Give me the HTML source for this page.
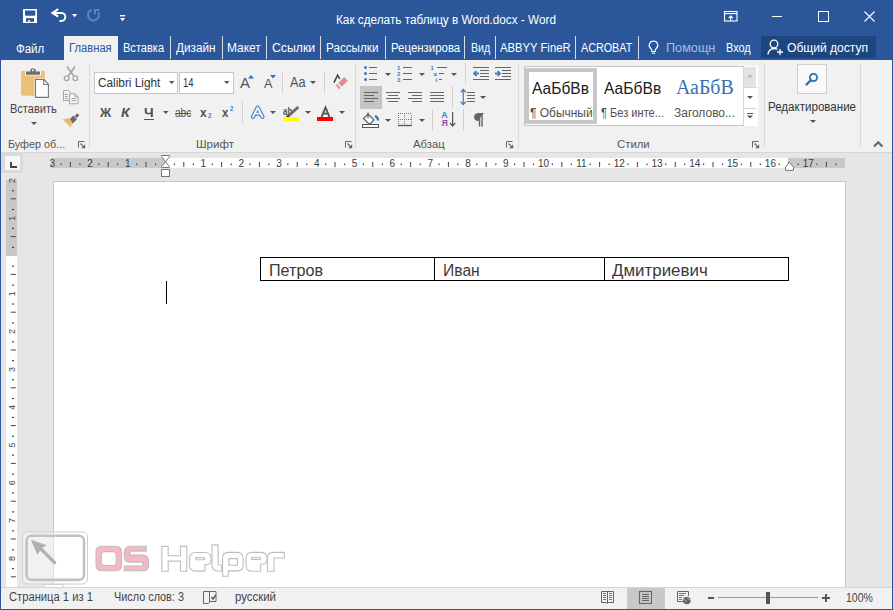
<!DOCTYPE html>
<html><head><meta charset="utf-8"><style>
html,body{margin:0;padding:0;width:893px;height:610px;overflow:hidden;background:#fff;}
body{position:relative;font-family:"Liberation Sans",sans-serif;}
.t{position:absolute;white-space:nowrap;transform-origin:0 0;}
.r{position:absolute;}
svg.r{overflow:visible;}
</style></head><body>
<div class="r" style="left:0px;top:0px;width:893px;height:60px;background:#2B579A;"></div>
<svg class="r" style="left:23px;top:9px;" width="14" height="14" viewBox="0 0 14 14"><rect x="0" y="0" width="14" height="14" rx="0.6" fill="#fff"/><path d="M2 1.4h10.3v4.6l-0.8 0.8h-8.7l-0.8-0.8z" fill="#2B579A"/><rect x="3" y="9.2" width="8" height="3.6" fill="#2B579A"/><rect x="5.1" y="11.2" width="2" height="1.6" fill="#fff"/></svg>
<svg class="r" style="left:50px;top:7px;" width="18" height="17" viewBox="0 0 18 17"><path d="M2.5 5.9H11.3A4 4 0 0 1 11.3 13.9H9.5" fill="none" stroke="#fff" stroke-width="2"/><path d="M8.2 2.2L2.6 5.9 8.2 9.6" fill="none" stroke="#fff" stroke-width="2.2"/></svg>
<svg class="r" style="left:71.8px;top:13.8px;" width="5.2" height="3.2" viewBox="0 0 5.2 3.2"><path d="M0 0h5.2l-2.6 3.2z" fill="#fff"/></svg>
<svg class="r" style="left:86px;top:8px;" width="15" height="15" viewBox="0 0 15 15"><path d="M5.62 1.83A5.5 5.5 0 1 0 12.26 4.25" fill="none" stroke="#6182B9" stroke-width="2.1"/><path d="M8 1.1H14L12.6 3H10V5.6L8 6.9Z" fill="#6182B9"/></svg>
<svg class="r" style="left:119.9px;top:14.9px;" width="5.1" height="6.2" viewBox="0 0 5.1 6.2"><rect x="0" y="0" width="5.1" height="1.4" fill="#fff"/><path d="M0 3h5.1l-2.55 3.2z" fill="#fff"/></svg>
<div class="t" style="left:335.60px;top:11.64px;font-size:12px;line-height:16px;color:#fff;font-weight:400;font-family:'Liberation Sans',sans-serif;transform:scaleX(0.9808);">Как сделать таблицу в Word.docx - Word</div>
<svg class="r" style="left:724px;top:11px;" width="14" height="11" viewBox="0 0 14 11"><rect x="0.5" y="0.5" width="12.5" height="9.5" fill="none" stroke="#fff" stroke-width="1.1"/><line x1="0.5" y1="2.6" x2="13" y2="2.6" stroke="#fff" stroke-width="1.1"/><path d="M6.75 10V5M4.6 7.1L6.75 5 8.9 7.1" fill="none" stroke="#fff" stroke-width="1.1"/></svg>
<div class="r" style="left:772px;top:16px;width:10px;height:1px;background:#fff;"></div>
<svg class="r" style="left:818px;top:11px;" width="11" height="11" viewBox="0 0 11 11"><rect x="0.5" y="0.5" width="10" height="10" fill="none" stroke="#fff" stroke-width="1"/></svg>
<svg class="r" style="left:864px;top:11px;" width="11" height="11" viewBox="0 0 11 11"><path d="M0.5 0.5L10.5 10.5M10.5 0.5L0.5 10.5" stroke="#fff" stroke-width="1.1"/></svg>
<div class="r" style="left:64px;top:36px;width:54px;height:24px;background:#F1F1F1;"></div>
<div class="t" style="left:16.00px;top:40.64px;font-size:12px;line-height:16px;color:#fff;font-weight:400;font-family:'Liberation Sans',sans-serif;transform:scaleX(0.9567);">Файл</div>
<div class="t" style="left:68.50px;top:39.84px;font-size:12px;line-height:16px;color:#2B579A;font-weight:400;font-family:'Liberation Sans',sans-serif;transform:scaleX(0.9348);">Главная</div>
<div class="t" style="left:122.90px;top:39.84px;font-size:12px;line-height:16px;color:#fff;font-weight:400;font-family:'Liberation Sans',sans-serif;transform:scaleX(0.9200);">Вставка</div>
<div class="t" style="left:176.40px;top:39.84px;font-size:12px;line-height:16px;color:#fff;font-weight:400;font-family:'Liberation Sans',sans-serif;transform:scaleX(0.9825);">Дизайн</div>
<div class="t" style="left:227.20px;top:39.84px;font-size:12px;line-height:16px;color:#fff;font-weight:400;font-family:'Liberation Sans',sans-serif;transform:scaleX(0.9941);">Макет</div>
<div class="t" style="left:271.70px;top:39.84px;font-size:12px;line-height:16px;color:#fff;font-weight:400;font-family:'Liberation Sans',sans-serif;transform:scaleX(1.0214);">Ссылки</div>
<div class="t" style="left:326.20px;top:39.84px;font-size:12px;line-height:16px;color:#fff;font-weight:400;font-family:'Liberation Sans',sans-serif;transform:scaleX(0.9741);">Рассылки</div>
<div class="t" style="left:390.70px;top:39.84px;font-size:12px;line-height:16px;color:#fff;font-weight:400;font-family:'Liberation Sans',sans-serif;transform:scaleX(0.9521);">Рецензирова</div>
<div class="t" style="left:470.50px;top:39.84px;font-size:12px;line-height:16px;color:#fff;font-weight:400;font-family:'Liberation Sans',sans-serif;transform:scaleX(0.8864);">Вид</div>
<div class="t" style="left:500.00px;top:39.84px;font-size:12px;line-height:16px;color:#fff;font-weight:400;font-family:'Liberation Sans',sans-serif;transform:scaleX(0.9387);">ABBYY FineR</div>
<div class="t" style="left:580.50px;top:39.84px;font-size:12px;line-height:16px;color:#fff;font-weight:400;font-family:'Liberation Sans',sans-serif;transform:scaleX(0.8966);">ACROBAT</div>
<div class="r" style="left:170px;top:36px;width:1px;height:23px;background:#D5DDEA;"></div>
<div class="r" style="left:222px;top:36px;width:1px;height:23px;background:#D5DDEA;"></div>
<div class="r" style="left:266px;top:36px;width:1px;height:23px;background:#D5DDEA;"></div>
<div class="r" style="left:320px;top:36px;width:1px;height:23px;background:#D5DDEA;"></div>
<div class="r" style="left:385px;top:36px;width:1px;height:23px;background:#D5DDEA;"></div>
<div class="r" style="left:464px;top:36px;width:1px;height:23px;background:#D5DDEA;"></div>
<div class="r" style="left:495px;top:36px;width:1px;height:23px;background:#D5DDEA;"></div>
<div class="r" style="left:575px;top:36px;width:1px;height:23px;background:#D5DDEA;"></div>
<div class="r" style="left:638px;top:36px;width:1px;height:23px;background:#D5DDEA;"></div>
<div class="r" style="left:571px;top:37px;width:4px;height:22px;background:#2B579A;"></div>
<svg class="r" style="left:648px;top:40px;" width="11" height="15" viewBox="0 0 11 15"><path d="M5.5 1a4.3 4.3 0 0 0-2.6 7.7c.6.5.9 1.2.9 2v.8h3.4v-.8c0-.8.3-1.5.9-2A4.3 4.3 0 0 0 5.5 1z" fill="none" stroke="#fff" stroke-width="1.1"/><path d="M3.8 13.2h3.4" stroke="#fff" stroke-width="1.1"/></svg>
<div class="t" style="left:665.80px;top:39.84px;font-size:12px;line-height:16px;color:#A9BEDF;font-weight:400;font-family:'Liberation Sans',sans-serif;transform:scaleX(1.0553);">Помощн</div>
<div class="t" style="left:726.20px;top:39.84px;font-size:12px;line-height:16px;color:#fff;font-weight:400;font-family:'Liberation Sans',sans-serif;transform:scaleX(0.9111);">Вход</div>
<div class="r" style="left:761px;top:36px;width:115px;height:22px;background:#1D4681;"></div>
<svg class="r" style="left:767px;top:39px;" width="17" height="17" viewBox="0 0 17 17"><circle cx="7" cy="5" r="3.8" fill="none" stroke="#fff" stroke-width="1.3"/><path d="M1 15.5c0-3.5 2.7-6 6-6 1.2 0 2.3.3 3.2.9" fill="none" stroke="#fff" stroke-width="1.3"/><path d="M13 10v6M10 13h6" stroke="#fff" stroke-width="1.3"/></svg>
<div class="t" style="left:787.00px;top:39.84px;font-size:12px;line-height:16px;color:#fff;font-weight:400;font-family:'Liberation Sans',sans-serif;transform:scaleX(1.0049);">Общий доступ</div>
<div class="r" style="left:0px;top:60px;width:893px;height:92px;background:#F1F1F1;"></div>
<div class="r" style="left:0px;top:152px;width:893px;height:1px;background:#D6D6D6;"></div>
<div class="r" style="left:89px;top:64px;width:1px;height:84px;background:#DADADA;"></div>
<div class="r" style="left:355px;top:64px;width:1px;height:84px;background:#DADADA;"></div>
<div class="r" style="left:518px;top:64px;width:1px;height:84px;background:#DADADA;"></div>
<div class="r" style="left:764px;top:64px;width:1px;height:84px;background:#DADADA;"></div>
<div class="r" style="left:860px;top:64px;width:1px;height:84px;background:#DADADA;"></div>
<div class="t" style="left:7.50px;top:136.96px;font-size:10.5px;line-height:14px;color:#555;font-weight:400;font-family:'Liberation Sans',sans-serif;transform:scaleX(1.0268);">Буфер об...</div>
<div class="t" style="left:195.50px;top:137.16px;font-size:10.5px;line-height:14px;color:#555;font-weight:400;font-family:'Liberation Sans',sans-serif;transform:scaleX(1.1000);">Шрифт</div>
<div class="t" style="left:413.30px;top:137.16px;font-size:10.5px;line-height:14px;color:#555;font-weight:400;font-family:'Liberation Sans',sans-serif;transform:scaleX(1.0767);">Абзац</div>
<div class="t" style="left:617.00px;top:137.16px;font-size:10.5px;line-height:14px;color:#555;font-weight:400;font-family:'Liberation Sans',sans-serif;transform:scaleX(1.0800);">Стили</div>
<svg class="r" style="left:78px;top:141px;" width="8" height="8" viewBox="0 0 8 8"><path d="M0.5 6.5V0.5H6.5" fill="none" stroke="#666" stroke-width="1"/><path d="M2.5 2.5L5.5 5.5" stroke="#666" stroke-width="1.1"/><path d="M7.2 3.2V7.2H3.2Z" fill="#666"/></svg>
<svg class="r" style="left:345px;top:141px;" width="8" height="8" viewBox="0 0 8 8"><path d="M0.5 6.5V0.5H6.5" fill="none" stroke="#666" stroke-width="1"/><path d="M2.5 2.5L5.5 5.5" stroke="#666" stroke-width="1.1"/><path d="M7.2 3.2V7.2H3.2Z" fill="#666"/></svg>
<svg class="r" style="left:506px;top:141px;" width="8" height="8" viewBox="0 0 8 8"><path d="M0.5 6.5V0.5H6.5" fill="none" stroke="#666" stroke-width="1"/><path d="M2.5 2.5L5.5 5.5" stroke="#666" stroke-width="1.1"/><path d="M7.2 3.2V7.2H3.2Z" fill="#666"/></svg>
<svg class="r" style="left:752px;top:141px;" width="8" height="8" viewBox="0 0 8 8"><path d="M0.5 6.5V0.5H6.5" fill="none" stroke="#666" stroke-width="1"/><path d="M2.5 2.5L5.5 5.5" stroke="#666" stroke-width="1.1"/><path d="M7.2 3.2V7.2H3.2Z" fill="#666"/></svg>
<svg class="r" style="left:21px;top:68px;" width="29" height="31" viewBox="0 0 29 31"><rect x="0" y="2.8" width="24" height="25" rx="2" fill="#EBC177"/><path d="M4 3H8.7V1.6Q8.7 -0.2 10.5 -0.2H13.5Q15.3 -0.2 15.3 1.6V3H20V7.6H4Z" fill="#F4F4F4"/><path d="M5 3.6H9.3V1.9Q9.3 0.4 10.8 0.4H13.2Q14.7 0.4 14.7 1.9V3.6H19V6.8H5Z" fill="#6E6E6E"/><rect x="11.1" y="1.6" width="1.8" height="1.6" fill="#fff"/><path d="M14.5 11.5h8.5l4.4 4.6v13.3h-12.9z" fill="#fff" stroke="#F4F4F4" stroke-width="2.2"/><path d="M14.5 11.5h8.5l4.4 4.6v13.3h-12.9z" fill="#fff" stroke="#777" stroke-width="1.1"/><path d="M22.8 11.5v5h4.6" fill="none" stroke="#777" stroke-width="1.1"/></svg>
<div class="t" style="left:9.80px;top:100.84px;font-size:12px;line-height:16px;color:#444;font-weight:400;font-family:'Liberation Sans',sans-serif;transform:scaleX(0.9176);">Вставить</div>
<svg class="r" style="left:31px;top:122px;" width="6" height="4" viewBox="0 0 6 4"><path d="M0 0h6l-3 3z" fill="#555"/></svg>
<svg class="r" style="left:58px;top:62px;" width="30" height="66" viewBox="0 0 30 66"><path d="M9 4.5L15.6 13.8M17 4.5L10.4 13.8" stroke="#A6A6A6" stroke-width="1.7"/><circle cx="8.7" cy="16.2" r="2.4" fill="none" stroke="#A6A6A6" stroke-width="1.3"/><circle cx="17.3" cy="16.2" r="2.4" fill="none" stroke="#A6A6A6" stroke-width="1.3"/><path d="M5.5 28.5H10.5L12.5 30.5V38.5H5.5Z" fill="#F4F4F4" stroke="#A6A6A6"/><path d="M11.5 31.8H17L20 34.8V41.8H11.5Z" fill="#F4F4F4" stroke="#A6A6A6"/><path d="M17 31.8V34.8H20" fill="none" stroke="#A6A6A6"/><path d="M7 32.5h3M7 34.5h3M7 36.5h3M13.5 36.5h4.5M13.5 38.5h4.5" stroke="#A6A6A6"/><path d="M20.4 52.2L17.6 55" stroke="#6A6A6A" stroke-width="2.8"/><path d="M17.2 55.4L12.6 60" stroke="#6A6A6A" stroke-width="5.2"/><path d="M4.5 57.6L10.4 56L14.3 59.9L12.8 65.6Z" fill="#E8BD6B"/></svg>
<div class="r" style="left:94px;top:72px;width:84px;height:22px;background:#fff;border:1px solid #C6C6C6;box-sizing:border-box;"></div>
<div class="r" style="left:179px;top:72px;width:55px;height:22px;background:#fff;border:1px solid #C6C6C6;box-sizing:border-box;"></div>
<div class="t" style="left:97.90px;top:75.34px;font-size:12px;line-height:16px;color:#333;font-weight:400;font-family:'Liberation Sans',sans-serif;transform:scaleX(0.9844);">Calibri Light</div>
<div class="t" style="left:183.00px;top:75.34px;font-size:12px;line-height:16px;color:#333;font-weight:400;font-family:'Liberation Sans',sans-serif;transform:scaleX(0.7857);">14</div>
<svg class="r" style="left:168.5px;top:81px;" width="6" height="4" viewBox="0 0 6 4"><path d="M0 0h5.5l-2.75 3z" fill="#555"/></svg>
<svg class="r" style="left:224px;top:81px;" width="6" height="4" viewBox="0 0 6 4"><path d="M0 0h5.5l-2.75 3z" fill="#555"/></svg>
<div class="t" style="left:240.00px;top:72.50px;font-size:15px;line-height:20px;color:#555;font-weight:400;font-family:'Liberation Sans',sans-serif;transform:scaleX(1.0000);">A</div>
<svg class="r" style="left:248px;top:75px;" width="6" height="4" viewBox="0 0 6 4"><path d="M0 3.5h6L3 0z" fill="#2F6EB7"/></svg>
<div class="t" style="left:263.50px;top:75.54px;font-size:12px;line-height:16px;color:#555;font-weight:400;font-family:'Liberation Sans',sans-serif;transform:scaleX(1.0625);">A</div>
<svg class="r" style="left:270px;top:75px;" width="6" height="4" viewBox="0 0 6 4"><path d="M0 0h6L3 3.5z" fill="#2F6EB7"/></svg>
<div class="r" style="left:282px;top:72px;width:1px;height:21px;background:#D0D0D0;"></div>
<div class="t" style="left:290.00px;top:73.15px;font-size:14px;line-height:18px;color:#555;font-weight:400;font-family:'Liberation Sans',sans-serif;transform:scaleX(0.9118);">Aa</div>
<svg class="r" style="left:310px;top:81px;" width="6" height="4" viewBox="0 0 6 4"><path d="M0 0h6l-3 3z" fill="#555"/></svg>
<div class="r" style="left:324px;top:72px;width:1px;height:21px;background:#D0D0D0;"></div>
<svg class="r" style="left:325px;top:68px;" width="30" height="27" viewBox="0 0 30 27"><path d="M8.9 14.6L12.6 7.1 14.8 11" fill="none" stroke="#444" stroke-width="1.5"/><path d="M19.2 9.1L22.8 12.8 16.8 18.8 13.3 15z" fill="#E8899A"/><path d="M10.6 17L12 16 15.7 19.7 14.4 21.5z" fill="#E8899A"/></svg>
<div class="t" style="left:99.85px;top:103.90px;font-size:13px;line-height:17px;color:#505050;font-weight:700;font-family:'Liberation Sans',sans-serif;transform:scaleX(0.9462);">Ж</div>
<div class="t" style="left:121.00px;top:103.90px;font-size:13px;line-height:17px;color:#505050;font-weight:700;font-family:'Liberation Sans',sans-serif;transform:scaleX(1.0875);font-style:italic;">К</div>
<div class="t" style="left:144.00px;top:103.90px;font-size:13px;line-height:17px;color:#505050;font-weight:700;font-family:'Liberation Sans',sans-serif;transform:scaleX(1.0556);">Ч</div>
<div class="r" style="left:144px;top:119px;width:10px;height:1px;background:#505050;"></div>
<svg class="r" style="left:163px;top:111px;" width="6" height="4" viewBox="0 0 6 4"><path d="M0 0h5.5l-2.75 3z" fill="#555"/></svg>
<div class="t" style="left:174.80px;top:104.74px;font-size:12px;line-height:16px;color:#555;font-weight:400;font-family:'Liberation Sans',sans-serif;transform:scaleX(0.8421);">abc</div>
<div class="r" style="left:175px;top:112.5px;width:16px;height:1px;background:#555;"></div>
<div class="t" style="left:199.50px;top:103.90px;font-size:13px;line-height:17px;color:#505050;font-weight:700;font-family:'Liberation Sans',sans-serif;transform:scaleX(0.9125);">x</div>
<div class="t" style="left:207.60px;top:112.45px;font-size:6.5px;line-height:8px;color:#3E7BC4;font-weight:700;font-family:'Liberation Sans',sans-serif;transform:scaleX(0.9500);">2</div>
<div class="t" style="left:221.50px;top:103.90px;font-size:13px;line-height:17px;color:#505050;font-weight:700;font-family:'Liberation Sans',sans-serif;transform:scaleX(0.8750);">x</div>
<div class="t" style="left:229.70px;top:104.75px;font-size:6.5px;line-height:8px;color:#3E7BC4;font-weight:700;font-family:'Liberation Sans',sans-serif;transform:scaleX(0.9000);">2</div>
<div class="r" style="left:242px;top:102px;width:1px;height:21px;background:#D0D0D0;"></div>
<svg class="r" style="left:248px;top:100px;" width="20" height="22" viewBox="0 0 20 22"><path d="M5 16.8L9.7 7.6 14.4 16.8M7 13.6H12.4" fill="none" stroke="#4A80C6" stroke-width="4.2" stroke-linejoin="round" stroke-linecap="round"/><path d="M5 16.8L9.7 7.6 14.4 16.8M7 13.6H12.4" fill="none" stroke="#F2F6FC" stroke-width="1.9" stroke-linejoin="round" stroke-linecap="round"/></svg>
<svg class="r" style="left:270px;top:111px;" width="6" height="4" viewBox="0 0 6 4"><path d="M0 0h6l-3 3z" fill="#555"/></svg>
<div class="t" style="left:282.80px;top:104.53px;font-size:10px;line-height:13px;color:#555;font-weight:700;font-family:'Liberation Sans',sans-serif;transform:scaleX(0.7917);">ab</div>
<svg class="r" style="left:284px;top:104px;" width="16" height="14" viewBox="0 0 16 14"><path d="M14.3 3L3.2 13" stroke="#6A6A6A" stroke-width="3"/><path d="M4.5 11.5L2.2 13.8" stroke="#333" stroke-width="1.5"/></svg>
<div class="r" style="left:283px;top:117px;width:16px;height:4px;background:#FFFF00;"></div>
<svg class="r" style="left:305px;top:111px;" width="6" height="4" viewBox="0 0 6 4"><path d="M0 0h6l-3 3z" fill="#555"/></svg>
<svg class="r" style="left:317px;top:104px;" width="17" height="14" viewBox="0 0 17 14"><path d="M4.6 12.8L8.5 3.4 12.4 12.8M6.1 9.6H10.9" fill="none" stroke="#555" stroke-width="1.9"/></svg>
<div class="r" style="left:317px;top:117px;width:16px;height:4px;background:#FF0000;"></div>
<svg class="r" style="left:339px;top:111px;" width="6" height="4" viewBox="0 0 6 4"><path d="M0 0h6l-3 3z" fill="#555"/></svg>
<svg class="r" style="left:358px;top:62px;" width="60" height="24" viewBox="0 0 60 24"><circle cx="7.5" cy="5.5" r="1.5" fill="#3E7BC4"/><circle cx="7.5" cy="11.5" r="1.5" fill="#3E7BC4"/><circle cx="7.5" cy="17.5" r="1.5" fill="#3E7BC4"/><rect x="11" y="5" width="8" height="1" fill="#666"/><rect x="11" y="11" width="8" height="1" fill="#666"/><rect x="11" y="17" width="8" height="1" fill="#666"/></svg>
<svg class="r" style="left:385px;top:73px;" width="6" height="4" viewBox="0 0 6 4"><path d="M0 0h6l-3 3z" fill="#555"/></svg>
<svg class="r" style="left:390px;top:62px;" width="30" height="24" viewBox="0 0 30 24"><g font-size="6" font-family="Liberation Sans" fill="#3E7BC4" font-weight="700"><text x="7" y="8">1</text><text x="7" y="14">2</text><text x="7" y="20">3</text></g><rect x="13" y="5" width="9" height="1" fill="#666"/><rect x="13" y="11" width="9" height="1" fill="#666"/><rect x="13" y="17" width="9" height="1" fill="#666"/></svg>
<svg class="r" style="left:419px;top:73px;" width="6" height="4" viewBox="0 0 6 4"><path d="M0 0h6l-3 3z" fill="#555"/></svg>
<svg class="r" style="left:425px;top:62px;" width="30" height="24" viewBox="0 0 30 24"><g font-size="6" font-family="Liberation Sans" fill="#3E7BC4" font-weight="700"><text x="5.5" y="8">1</text><text x="8.5" y="14">a</text><text x="10.5" y="20">i</text></g><rect x="12" y="5" width="10" height="1" fill="#666"/><rect x="14" y="11" width="5" height="1" fill="#666"/><rect x="14" y="17" width="3" height="1" fill="#666"/></svg>
<svg class="r" style="left:451px;top:73px;" width="6" height="4" viewBox="0 0 6 4"><path d="M0 0h6l-3 3z" fill="#555"/></svg>
<div class="r" style="left:465px;top:63px;width:1px;height:21px;background:#D0D0D0;"></div>
<svg class="r" style="left:470px;top:62px;" width="45" height="24" viewBox="0 0 45 24"><rect x="3" y="5" width="16" height="1" fill="#666"/><rect x="3" y="17" width="16" height="1" fill="#666"/><rect x="10" y="8" width="9" height="1" fill="#666"/><rect x="10" y="11" width="9" height="1" fill="#666"/><rect x="10" y="14" width="9" height="1" fill="#666"/><path d="M4 11.5h5M6.4 9L4 11.5 6.4 14" fill="none" stroke="#3E7BC4" stroke-width="1.8"/><rect x="25" y="5" width="16" height="1" fill="#666"/><rect x="25" y="17" width="16" height="1" fill="#666"/><rect x="32" y="8" width="9" height="1" fill="#666"/><rect x="32" y="11" width="9" height="1" fill="#666"/><rect x="32" y="14" width="9" height="1" fill="#666"/><path d="M25 11.5h5M27.6 9L30 11.5 27.6 14" fill="none" stroke="#3E7BC4" stroke-width="1.8"/></svg>
<div class="r" style="left:360px;top:86px;width:22px;height:23px;background:#C5C5C5;"></div>
<svg class="r" style="left:364px;top:91px;" width="14" height="12" viewBox="0 0 14 12"><rect x="0" y="1" width="14" height="1" fill="#666"/><rect x="0" y="4" width="10" height="1" fill="#666"/><rect x="0" y="7" width="14" height="1" fill="#666"/><rect x="0" y="10" width="10" height="1" fill="#666"/></svg>
<svg class="r" style="left:386px;top:91px;" width="14" height="12" viewBox="0 0 14 12"><rect x="0" y="1" width="14" height="1" fill="#666"/><rect x="2" y="4" width="10" height="1" fill="#666"/><rect x="0" y="7" width="14" height="1" fill="#666"/><rect x="2" y="10" width="10" height="1" fill="#666"/></svg>
<svg class="r" style="left:408px;top:91px;" width="14" height="12" viewBox="0 0 14 12"><rect x="0" y="1" width="14" height="1" fill="#666"/><rect x="4" y="4" width="10" height="1" fill="#666"/><rect x="0" y="7" width="14" height="1" fill="#666"/><rect x="4" y="10" width="10" height="1" fill="#666"/></svg>
<svg class="r" style="left:430px;top:91px;" width="14" height="12" viewBox="0 0 14 12"><rect x="0" y="1" width="14" height="1" fill="#666"/><rect x="0" y="4" width="14" height="1" fill="#666"/><rect x="0" y="7" width="14" height="1" fill="#666"/><rect x="0" y="10" width="14" height="1" fill="#666"/></svg>
<div class="r" style="left:452px;top:86px;width:1px;height:22px;background:#D0D0D0;"></div>
<svg class="r" style="left:459px;top:88px;" width="17" height="18" viewBox="0 0 17 18"><path d="M4.3 1.5v15" stroke="#3E7BC4" stroke-width="1.2"/><path d="M1.8 4.2L4.3 1.5l2.5 2.7M1.8 13.8L4.3 16.5l2.5-2.7" fill="none" stroke="#3E7BC4" stroke-width="1.3"/><rect x="8" y="4" width="8" height="1" fill="#666"/><rect x="8" y="7" width="8" height="1" fill="#666"/><rect x="8" y="10" width="8" height="1" fill="#666"/><rect x="8" y="13" width="8" height="1" fill="#666"/></svg>
<svg class="r" style="left:480px;top:96px;" width="6" height="4" viewBox="0 0 6 4"><path d="M0 0h6l-3 3z" fill="#555"/></svg>
<svg class="r" style="left:362px;top:112px;" width="18" height="16" viewBox="0 0 18 16"><path d="M6 2l6 6-4.5 4.5-6-6z" fill="#fff" stroke="#555" stroke-width="1.1"/><path d="M6 0.5v6" stroke="#555" stroke-width="1.1"/><path d="M13 4c2 1 3.2 2.5 3 4.5" fill="none" stroke="#2F6EB7" stroke-width="2"/><rect x="0.5" y="12.5" width="16" height="3" fill="#fff" stroke="#555" stroke-width="1"/></svg>
<svg class="r" style="left:385px;top:119px;" width="6" height="4" viewBox="0 0 6 4"><path d="M0 0h6l-3 3z" fill="#555"/></svg>
<svg class="r" style="left:398px;top:113px;" width="14" height="13" viewBox="0 0 14 13"><g fill="#777"><rect x="0" y="0" width="1" height="1"/><rect x="0" y="6" width="1" height="1"/><rect x="2" y="0" width="1" height="1"/><rect x="2" y="6" width="1" height="1"/><rect x="4" y="0" width="1" height="1"/><rect x="4" y="6" width="1" height="1"/><rect x="6" y="0" width="1" height="1"/><rect x="6" y="6" width="1" height="1"/><rect x="8" y="0" width="1" height="1"/><rect x="8" y="6" width="1" height="1"/><rect x="10" y="0" width="1" height="1"/><rect x="10" y="6" width="1" height="1"/><rect x="12" y="0" width="1" height="1"/><rect x="12" y="6" width="1" height="1"/><rect x="0" y="2" width="1" height="1"/><rect x="0" y="4" width="1" height="1"/><rect x="0" y="6" width="1" height="1"/><rect x="0" y="8" width="1" height="1"/><rect x="0" y="10" width="1" height="1"/><rect x="6" y="2" width="1" height="1"/><rect x="6" y="4" width="1" height="1"/><rect x="6" y="6" width="1" height="1"/><rect x="6" y="8" width="1" height="1"/><rect x="6" y="10" width="1" height="1"/><rect x="13" y="2" width="1" height="1"/><rect x="13" y="4" width="1" height="1"/><rect x="13" y="6" width="1" height="1"/><rect x="13" y="8" width="1" height="1"/><rect x="13" y="10" width="1" height="1"/></g><path d="M0 12.5h14" stroke="#555" stroke-width="1.3"/></svg>
<svg class="r" style="left:419px;top:119px;" width="6" height="4" viewBox="0 0 6 4"><path d="M0 0h6l-3 3z" fill="#555"/></svg>
<div class="r" style="left:432px;top:109px;width:1px;height:22px;background:#D0D0D0;"></div>
<svg class="r" style="left:441px;top:111px;" width="16" height="17" viewBox="0 0 16 17"><text x="0.3" y="7.4" font-size="8.8" font-family="Liberation Sans" fill="#3E7BC4" font-weight="700">А</text><text x="0.6" y="15.4" font-size="8.8" font-family="Liberation Sans" fill="#8E4DB0" font-weight="700">Я</text><path d="M11.6 1v14M9 12L11.6 15 14.2 12" fill="none" stroke="#555" stroke-width="1.2"/></svg>
<div class="r" style="left:463px;top:109px;width:1px;height:22px;background:#D0D0D0;"></div>
<svg class="r" style="left:474px;top:113px;" width="10" height="14" viewBox="0 0 10 14"><path d="M4 7.5A3.5 3.5 0 0 1 4 0.5H9.5" fill="#666" stroke="#666"/><path d="M5.5 0.8V13.5M8 0.8V13.5" stroke="#666" stroke-width="1.4"/><path d="M1 4.2A3 3 0 0 0 5 7.5V1z" fill="#666"/></svg>
<div class="r" style="left:524px;top:66px;width:233px;height:60px;background:#fff;border:1px solid #C6C6C6;box-sizing:border-box;"></div>
<div class="r" style="left:525px;top:68px;width:72px;height:56px;background:#fff;border:4px solid #C6C6C6;box-sizing:border-box;"></div>
<div class="t" style="left:531.90px;top:77.96px;font-size:16px;line-height:21px;color:#222;font-weight:400;font-family:'Liberation Sans',sans-serif;transform:scaleX(0.9712);">АаБбВв</div>
<div class="t" style="left:529.50px;top:104.84px;font-size:12px;line-height:16px;color:#505050;font-weight:400;font-family:'Liberation Sans',sans-serif;transform:scaleX(0.9968);">¶ Обычный</div>
<div class="t" style="left:603.60px;top:77.96px;font-size:16px;line-height:21px;color:#222;font-weight:400;font-family:'Liberation Sans',sans-serif;transform:scaleX(0.9763);">АаБбВв</div>
<div class="t" style="left:601.30px;top:104.84px;font-size:12px;line-height:16px;color:#505050;font-weight:400;font-family:'Liberation Sans',sans-serif;transform:scaleX(0.9221);">¶ Без инте...</div>
<div class="t" style="left:676.30px;top:74.37px;font-size:20px;line-height:26px;color:#3A6FB0;font-weight:400;font-family:'Liberation Serif',sans-serif;transform:scaleX(0.9948);">АаБбВ</div>
<div class="t" style="left:673.60px;top:104.84px;font-size:12px;line-height:16px;color:#505050;font-weight:400;font-family:'Liberation Sans',sans-serif;transform:scaleX(0.9967);">Заголово...</div>
<div class="r" style="left:743px;top:66px;width:14px;height:60px;background:#fff;border-left:1px solid #D6D6D6;"></div>
<div class="r" style="left:744px;top:67px;width:12px;height:20px;background:#E3E3E3;"></div>
<div class="r" style="left:743px;top:87px;width:14px;height:1px;background:#D6D6D6;"></div>
<div class="r" style="left:743px;top:108px;width:14px;height:1px;background:#D6D6D6;"></div>
<svg class="r" style="left:747px;top:74px;" width="6" height="4" viewBox="0 0 6 4"><path d="M0 3.5h6L3 0z" fill="#C0C0C0"/></svg>
<svg class="r" style="left:747px;top:96px;" width="6" height="4" viewBox="0 0 6 4"><path d="M0 0h6l-3 3z" fill="#555"/></svg>
<svg class="r" style="left:747px;top:113px;" width="6" height="7" viewBox="0 0 6 7"><rect x="0" y="0" width="6" height="1" fill="#555"/><path d="M0 2.5h6l-3 3z" fill="#555"/></svg>
<div class="r" style="left:797px;top:64px;width:30px;height:30px;background:#F8F8F8;border:1px solid #D0D0D0;box-sizing:border-box;"></div>
<svg class="r" style="left:805px;top:72px;" width="14" height="14" viewBox="0 0 14 14"><circle cx="8.5" cy="5.5" r="3.6" fill="none" stroke="#2F6EB7" stroke-width="1.8"/><path d="M6 8L1.5 12.5" stroke="#2F6EB7" stroke-width="2.4" stroke-linecap="round"/></svg>
<div class="t" style="left:768.40px;top:98.84px;font-size:12px;line-height:16px;color:#333;font-weight:400;font-family:'Liberation Sans',sans-serif;transform:scaleX(0.9630);">Редактирование</div>
<svg class="r" style="left:810px;top:120px;" width="6" height="4" viewBox="0 0 6 4"><path d="M0 0h6l-3 3z" fill="#555"/></svg>
<svg class="r" style="left:872.5px;top:140px;" width="10" height="8" viewBox="0 0 10 8"><path d="M1 6.5l4.2-4.3 4.2 4.3" fill="none" stroke="#666" stroke-width="2.2"/></svg>
<div class="r" style="left:0px;top:153px;width:893px;height:434px;background:#E6E6E6;"></div>
<div class="r" style="left:1px;top:152px;width:22px;height:21px;background:#DADADA;"></div>
<div class="r" style="left:5px;top:156px;width:15px;height:14px;background:#F7F7F7;"></div>
<svg class="r" style="left:10px;top:162px;" width="7" height="6" viewBox="0 0 7 6"><path d="M1 0v5h6" fill="none" stroke="#444" stroke-width="2"/></svg>
<div class="r" style="left:51px;top:158px;width:794px;height:10px;background:#C8C8C8;"></div>
<div class="r" style="left:165px;top:158px;width:623px;height:10px;background:#fff;"></div>
<svg class="r" style="left:0px;top:158px;" width="893" height="10" viewBox="0 0 893 10"><text x="52.2" y="8.9" font-size="10" font-family="Liberation Sans" fill="#3a3a3a" text-anchor="middle">3</text><rect x="60.5" y="5.5" width="1.2" height="1.6" fill="#444"/><rect x="69.9" y="4" width="1" height="5" fill="#444"/><rect x="79.3" y="5.5" width="1.2" height="1.6" fill="#444"/><text x="90.0" y="8.9" font-size="10" font-family="Liberation Sans" fill="#3a3a3a" text-anchor="middle">2</text><rect x="98.2" y="5.5" width="1.2" height="1.6" fill="#444"/><rect x="107.7" y="4" width="1" height="5" fill="#444"/><rect x="117.1" y="5.5" width="1.2" height="1.6" fill="#444"/><text x="127.8" y="8.9" font-size="10" font-family="Liberation Sans" fill="#3a3a3a" text-anchor="middle">1</text><rect x="136.1" y="5.5" width="1.2" height="1.6" fill="#444"/><rect x="145.5" y="4" width="1" height="5" fill="#444"/><rect x="155.0" y="5.5" width="1.2" height="1.6" fill="#444"/><rect x="173.8" y="5.5" width="1.2" height="1.6" fill="#444"/><rect x="183.3" y="4" width="1" height="5" fill="#444"/><rect x="192.8" y="5.5" width="1.2" height="1.6" fill="#444"/><text x="203.4" y="8.9" font-size="10" font-family="Liberation Sans" fill="#3a3a3a" text-anchor="middle">1</text><rect x="211.7" y="5.5" width="1.2" height="1.6" fill="#444"/><rect x="221.1" y="4" width="1" height="5" fill="#444"/><rect x="230.6" y="5.5" width="1.2" height="1.6" fill="#444"/><text x="241.2" y="8.9" font-size="10" font-family="Liberation Sans" fill="#3a3a3a" text-anchor="middle">2</text><rect x="249.4" y="5.5" width="1.2" height="1.6" fill="#444"/><rect x="258.9" y="4" width="1" height="5" fill="#444"/><rect x="268.3" y="5.5" width="1.2" height="1.6" fill="#444"/><text x="279.0" y="8.9" font-size="10" font-family="Liberation Sans" fill="#3a3a3a" text-anchor="middle">3</text><rect x="287.2" y="5.5" width="1.2" height="1.6" fill="#444"/><rect x="296.7" y="4" width="1" height="5" fill="#444"/><rect x="306.2" y="5.5" width="1.2" height="1.6" fill="#444"/><text x="316.8" y="8.9" font-size="10" font-family="Liberation Sans" fill="#3a3a3a" text-anchor="middle">4</text><rect x="325.1" y="5.5" width="1.2" height="1.6" fill="#444"/><rect x="334.5" y="4" width="1" height="5" fill="#444"/><rect x="343.9" y="5.5" width="1.2" height="1.6" fill="#444"/><text x="354.6" y="8.9" font-size="10" font-family="Liberation Sans" fill="#3a3a3a" text-anchor="middle">5</text><rect x="362.8" y="5.5" width="1.2" height="1.6" fill="#444"/><rect x="372.3" y="4" width="1" height="5" fill="#444"/><rect x="381.8" y="5.5" width="1.2" height="1.6" fill="#444"/><text x="392.4" y="8.9" font-size="10" font-family="Liberation Sans" fill="#3a3a3a" text-anchor="middle">6</text><rect x="400.6" y="5.5" width="1.2" height="1.6" fill="#444"/><rect x="410.1" y="4" width="1" height="5" fill="#444"/><rect x="419.6" y="5.5" width="1.2" height="1.6" fill="#444"/><text x="430.2" y="8.9" font-size="10" font-family="Liberation Sans" fill="#3a3a3a" text-anchor="middle">7</text><rect x="438.4" y="5.5" width="1.2" height="1.6" fill="#444"/><rect x="447.9" y="4" width="1" height="5" fill="#444"/><rect x="457.3" y="5.5" width="1.2" height="1.6" fill="#444"/><text x="468.0" y="8.9" font-size="10" font-family="Liberation Sans" fill="#3a3a3a" text-anchor="middle">8</text><rect x="476.2" y="5.5" width="1.2" height="1.6" fill="#444"/><rect x="485.7" y="4" width="1" height="5" fill="#444"/><rect x="495.2" y="5.5" width="1.2" height="1.6" fill="#444"/><text x="505.8" y="8.9" font-size="10" font-family="Liberation Sans" fill="#3a3a3a" text-anchor="middle">9</text><rect x="514.0" y="5.5" width="1.2" height="1.6" fill="#444"/><rect x="523.5" y="4" width="1" height="5" fill="#444"/><rect x="532.9" y="5.5" width="1.2" height="1.6" fill="#444"/><text x="543.6" y="8.9" font-size="10" font-family="Liberation Sans" fill="#3a3a3a" text-anchor="middle">10</text><rect x="551.8" y="5.5" width="1.2" height="1.6" fill="#444"/><rect x="561.3" y="4" width="1" height="5" fill="#444"/><rect x="570.7" y="5.5" width="1.2" height="1.6" fill="#444"/><text x="581.4" y="8.9" font-size="10" font-family="Liberation Sans" fill="#3a3a3a" text-anchor="middle">11</text><rect x="589.6" y="5.5" width="1.2" height="1.6" fill="#444"/><rect x="599.1" y="4" width="1" height="5" fill="#444"/><rect x="608.5" y="5.5" width="1.2" height="1.6" fill="#444"/><text x="619.2" y="8.9" font-size="10" font-family="Liberation Sans" fill="#3a3a3a" text-anchor="middle">12</text><rect x="627.4" y="5.5" width="1.2" height="1.6" fill="#444"/><rect x="636.9" y="4" width="1" height="5" fill="#444"/><rect x="646.3" y="5.5" width="1.2" height="1.6" fill="#444"/><text x="657.0" y="8.9" font-size="10" font-family="Liberation Sans" fill="#3a3a3a" text-anchor="middle">13</text><rect x="665.2" y="5.5" width="1.2" height="1.6" fill="#444"/><rect x="674.7" y="4" width="1" height="5" fill="#444"/><rect x="684.1" y="5.5" width="1.2" height="1.6" fill="#444"/><text x="694.8" y="8.9" font-size="10" font-family="Liberation Sans" fill="#3a3a3a" text-anchor="middle">14</text><rect x="703.0" y="5.5" width="1.2" height="1.6" fill="#444"/><rect x="712.5" y="4" width="1" height="5" fill="#444"/><rect x="721.9" y="5.5" width="1.2" height="1.6" fill="#444"/><text x="732.6" y="8.9" font-size="10" font-family="Liberation Sans" fill="#3a3a3a" text-anchor="middle">15</text><rect x="740.8" y="5.5" width="1.2" height="1.6" fill="#444"/><rect x="750.3" y="4" width="1" height="5" fill="#444"/><rect x="759.7" y="5.5" width="1.2" height="1.6" fill="#444"/><text x="770.4" y="8.9" font-size="10" font-family="Liberation Sans" fill="#3a3a3a" text-anchor="middle">16</text><rect x="778.6" y="5.5" width="1.2" height="1.6" fill="#444"/><rect x="788.1" y="4" width="1" height="5" fill="#444"/><rect x="797.5" y="5.5" width="1.2" height="1.6" fill="#444"/><text x="808.2" y="8.9" font-size="10" font-family="Liberation Sans" fill="#3a3a3a" text-anchor="middle">17</text><rect x="816.4" y="5.5" width="1.2" height="1.6" fill="#444"/><rect x="825.9" y="4" width="1" height="5" fill="#444"/><rect x="835.3" y="5.5" width="1.2" height="1.6" fill="#444"/></svg>
<svg class="r" style="left:161px;top:155px;" width="10" height="23" viewBox="0 0 10 23"><path d="M0.5 0.5h8v1L4.5 7 0.5 1.5z" fill="#fff" stroke="#777" stroke-width="1"/><path d="M4.5 7L8.5 11.5v1h-8v-1z" fill="#fff" stroke="#777" stroke-width="1"/><rect x="0.5" y="14.5" width="8" height="7" fill="#fff" stroke="#777" stroke-width="1"/></svg>
<svg class="r" style="left:784px;top:161px;" width="11" height="11" viewBox="0 0 11 11"><path d="M5.4 1.2L9.5 6.3V9.4H1.5V6.3Z" fill="#fff" stroke="#777" stroke-width="1"/></svg>
<div class="r" style="left:6px;top:180px;width:11px;height:76px;background:#C8C8C8;"></div>
<div class="r" style="left:6px;top:256px;width:11px;height:331px;background:#fff;"></div>
<svg class="r" style="left:0px;top:0px;" width="30" height="610" viewBox="0 0 30 610"><text x="0" y="0" font-size="9" font-family="Liberation Sans" fill="#444" text-anchor="middle" transform="translate(14.7 180.4) rotate(-90)">2</text><rect x="12" y="190.1" width="2" height="1.2" fill="#444"/><rect x="10.8" y="198.3" width="5" height="1" fill="#444"/><rect x="12" y="208.9" width="2" height="1.2" fill="#444"/><text x="0" y="0" font-size="9" font-family="Liberation Sans" fill="#444" text-anchor="middle" transform="translate(14.7 218.2) rotate(-90)">1</text><rect x="12" y="227.8" width="2" height="1.2" fill="#444"/><rect x="10.8" y="236.1" width="5" height="1" fill="#444"/><rect x="12" y="246.8" width="2" height="1.2" fill="#444"/><rect x="12" y="265.6" width="2" height="1.2" fill="#444"/><rect x="10.8" y="273.9" width="5" height="1" fill="#444"/><rect x="12" y="284.6" width="2" height="1.2" fill="#444"/><text x="0" y="0" font-size="9" font-family="Liberation Sans" fill="#444" text-anchor="middle" transform="translate(14.7 293.8) rotate(-90)">1</text><rect x="12" y="303.4" width="2" height="1.2" fill="#444"/><rect x="10.8" y="311.7" width="5" height="1" fill="#444"/><rect x="12" y="322.3" width="2" height="1.2" fill="#444"/><text x="0" y="0" font-size="9" font-family="Liberation Sans" fill="#444" text-anchor="middle" transform="translate(14.7 331.6) rotate(-90)">2</text><rect x="12" y="341.2" width="2" height="1.2" fill="#444"/><rect x="10.8" y="349.5" width="5" height="1" fill="#444"/><rect x="12" y="360.1" width="2" height="1.2" fill="#444"/><text x="0" y="0" font-size="9" font-family="Liberation Sans" fill="#444" text-anchor="middle" transform="translate(14.7 369.4) rotate(-90)">3</text><rect x="12" y="379.1" width="2" height="1.2" fill="#444"/><rect x="10.8" y="387.3" width="5" height="1" fill="#444"/><rect x="12" y="397.9" width="2" height="1.2" fill="#444"/><text x="0" y="0" font-size="9" font-family="Liberation Sans" fill="#444" text-anchor="middle" transform="translate(14.7 407.2) rotate(-90)">4</text><rect x="12" y="416.8" width="2" height="1.2" fill="#444"/><rect x="10.8" y="425.1" width="5" height="1" fill="#444"/><rect x="12" y="435.7" width="2" height="1.2" fill="#444"/><text x="0" y="0" font-size="9" font-family="Liberation Sans" fill="#444" text-anchor="middle" transform="translate(14.7 445.0) rotate(-90)">5</text><rect x="12" y="454.6" width="2" height="1.2" fill="#444"/><rect x="10.8" y="462.9" width="5" height="1" fill="#444"/><rect x="12" y="473.6" width="2" height="1.2" fill="#444"/><text x="0" y="0" font-size="9" font-family="Liberation Sans" fill="#444" text-anchor="middle" transform="translate(14.7 482.8) rotate(-90)">6</text><rect x="12" y="492.4" width="2" height="1.2" fill="#444"/><rect x="10.8" y="500.7" width="5" height="1" fill="#444"/><rect x="12" y="511.3" width="2" height="1.2" fill="#444"/><text x="0" y="0" font-size="9" font-family="Liberation Sans" fill="#444" text-anchor="middle" transform="translate(14.7 520.6) rotate(-90)">7</text><rect x="12" y="530.2" width="2" height="1.2" fill="#444"/><rect x="10.8" y="538.5" width="5" height="1" fill="#444"/><rect x="12" y="549.2" width="2" height="1.2" fill="#444"/><text x="0" y="0" font-size="9" font-family="Liberation Sans" fill="#444" text-anchor="middle" transform="translate(14.7 558.4) rotate(-90)">8</text><rect x="12" y="568.0" width="2" height="1.2" fill="#444"/><rect x="10.8" y="576.3" width="5" height="1" fill="#444"/></svg>
<div class="r" style="left:53px;top:181px;width:793px;height:420px;background:#fff;border:1px solid #C6C6C6;box-sizing:border-box;"></div>
<div class="r" style="left:260px;top:257px;width:529px;height:24px;background:transparent;border:1px solid #000;box-sizing:border-box;"></div>
<div class="r" style="left:434px;top:257px;width:1px;height:24px;background:#000;"></div>
<div class="r" style="left:604px;top:257px;width:1px;height:24px;background:#000;"></div>
<div class="t" style="left:269.00px;top:259.56px;font-size:16px;line-height:21px;color:#3a3a3a;font-weight:400;font-family:'Liberation Sans',sans-serif;transform:scaleX(1.0093);">Петров</div>
<div class="t" style="left:443.30px;top:259.56px;font-size:16px;line-height:21px;color:#3a3a3a;font-weight:400;font-family:'Liberation Sans',sans-serif;transform:scaleX(0.9789);">Иван</div>
<div class="t" style="left:612.30px;top:259.56px;font-size:16px;line-height:21px;color:#3a3a3a;font-weight:400;font-family:'Liberation Sans',sans-serif;transform:scaleX(1.0560);">Дмитриевич</div>
<div class="r" style="left:166px;top:281px;width:1px;height:23px;background:#000;"></div>
<svg class="r" style="left:0px;top:0px;" width="893" height="610" viewBox="0 0 893 610"><defs><filter id="ol" x="-10%" y="-10%" width="120%" height="120%"><feMorphology in="SourceAlpha" operator="dilate" radius="1" result="d"/><feFlood flood-color="#BEBEBE"/><feComposite in2="d" operator="in" result="o"/><feMerge><feMergeNode in="o"/><feMergeNode in="SourceGraphic"/></feMerge></filter></defs>
<rect x="22.5" y="532" width="65" height="52" rx="5" fill="#fff" fill-opacity="0.45" stroke="#CFCFCF" stroke-width="1"/>
<rect x="26.6" y="535.7" width="57.4" height="44.2" rx="5" fill="none" stroke="#C2C2C2" stroke-width="2.6"/>
<path d="M54.6 562.6L40 548" stroke="#B0B0B0" stroke-width="3.2" stroke-linecap="round"/>
<path d="M30.8 539.8L46.5 545.3L41.6 548.2L37.4 554.6z" fill="#B0B0B0"/>
<path d="M43.5 587V586.3Q43.5 584.5 45.3 584.5H61.8Q63.6 584.5 63.6 586.3V587" fill="#fff" stroke="#CFCFCF" stroke-width="1"/>
<g fill="#F9B6C3" stroke="#BEBEBE" stroke-width="1.1" fill-rule="evenodd">
<path d="M96 552Q96 546.3 102 546.3H115.5Q121.5 546.3 121.5 552V565Q121.5 570.8 115.5 570.8H102Q96 570.8 96 565ZM101.3 554.6Q101.3 551.6 104.3 551.6H113.2Q116.2 551.6 116.2 554.6V562.5Q116.2 565.5 113.2 565.5H104.3Q101.3 565.5 101.3 562.5Z"/>
<path d="M146.3 546.3V551.1H130.1V555.1H142.5Q148.5 555.1 148.5 561.1V564.8Q148.5 570.8 142.5 570.8H124.3V566H142.7V562.3H130.3Q124.3 562.3 124.3 556.3V552.3Q124.3 546.3 130.3 546.3Z"/>
</g>
<g fill="#FFFFFF" stroke="#BEBEBE" stroke-width="1.1" fill-rule="evenodd">
<path d="M161.8 546.4H168.2V555.8H180.5V546.4H186.8V571.2H180.5V561.1H168.2V571.2H161.8Z"/>
<path d="M189.6 558.5Q189.6 552.5 195.6 552.5H205Q211 552.5 211 558.5V560Q211 564.8 206 564.8H204.9V571.1H195.6Q189.6 571.1 189.6 565.1ZM195.8 557.6H203.8Q204.8 557.6 204.8 558.65Q204.8 559.7 203.8 559.7H195.8Z"/>
<path d="M212 544.9H218.1V563.5Q218.1 565 219.6 565H221.7V571H218Q212 571 212 565Z"/>
<path d="M222.6 557.9Q222.6 552.4 228.6 552.4H237.1Q243.1 552.4 243.1 558.4V565Q243.1 570.9 237.1 570.9H228.3V576.2H222.6ZM228.8 558.6H237.4V565.2H228.8Z"/>
<path d="M246 558.4Q246 552.4 252 552.4H261Q267 552.4 267 558.4V559.5Q267 564.3 262 564.3H260.7V571.2H252Q246 571.2 246 565.2ZM251.7 557.3H259.7Q260.7 557.3 260.7 558.35Q260.7 559.4 259.7 559.4H251.7Z"/>
<path d="M267.5 558Q267.5 552.4 273.5 552.4H284.3V558H274V571.2H267.5Z"/>
</g></svg>
<div class="r" style="left:0px;top:587px;width:893px;height:1px;background:#D4D4D4;"></div>
<div class="r" style="left:0px;top:588px;width:893px;height:22px;background:#F1F1F1;"></div>
<div class="t" style="left:9.40px;top:588.84px;font-size:12px;line-height:16px;color:#444;font-weight:400;font-family:'Liberation Sans',sans-serif;transform:scaleX(0.9333);">Страница 1 из 1</div>
<div class="t" style="left:113.50px;top:588.84px;font-size:12px;line-height:16px;color:#444;font-weight:400;font-family:'Liberation Sans',sans-serif;transform:scaleX(0.9038);">Число слов: 3</div>
<svg class="r" style="left:202px;top:590px;" width="16" height="15" viewBox="0 0 16 15"><path d="M1.5 1.5H7.5V12.5L6.5 13.5H1.5Z" fill="none" stroke="#666" stroke-width="1"/><path d="M7.5 1.5H14V11.5H7.5" fill="none" stroke="#666" stroke-width="1"/><path d="M9.4 7.2L11 9 13.8 4.8" fill="none" stroke="#555" stroke-width="1.4"/></svg>
<div class="t" style="left:234.50px;top:588.84px;font-size:12px;line-height:16px;color:#444;font-weight:400;font-family:'Liberation Sans',sans-serif;transform:scaleX(0.9512);">русский</div>
<svg class="r" style="left:600px;top:590px;" width="16" height="15" viewBox="0 0 16 15"><path d="M1.5 1.5H13.5V12.5H8.5L7.5 13.5 6.5 12.5H1.5Z" fill="none" stroke="#666" stroke-width="1"/><path d="M7.5 1.5V13" stroke="#666"/><path d="M3 3.5h3M3 5.5h3M3 7.5h3M3 9.5h3M9 3.5h3M9 5.5h3M9 7.5h3M9 9.5h3" stroke="#777" stroke-width="1"/></svg>
<div class="r" style="left:627px;top:588px;width:38px;height:21px;background:#C8C8C8;"></div>
<svg class="r" style="left:638px;top:590px;" width="16" height="15" viewBox="0 0 16 15"><rect x="1.5" y="1.5" width="12" height="12" fill="none" stroke="#666" stroke-width="1.1"/><path d="M4 4.5h7M4 6.5h7M4 8.5h7M4 10.5h7" stroke="#666" stroke-width="1"/></svg>
<svg class="r" style="left:676px;top:590px;" width="16" height="16" viewBox="0 0 16 16"><path d="M8 11.5H1.5V1.5H12.5V6" fill="none" stroke="#666" stroke-width="1"/><path d="M3 3.5h7M3 5.5h5M3 7.5h3M3 9.5h3" stroke="#777" stroke-width="1"/><circle cx="10.8" cy="10.5" r="3.8" fill="#666"/><path d="M8.3 9.5c1 .2 1.6.9 1.8 2M11.5 7.5c.3 1 .9 1.6 2.2 1.8" stroke="#ddd" stroke-width="0.8" fill="none"/></svg>
<div class="r" style="left:708px;top:597px;width:6px;height:2px;background:#555;"></div>
<div class="r" style="left:718px;top:597px;width:100px;height:1px;background:#999;"></div>
<div class="r" style="left:766px;top:592px;width:4px;height:12px;background:#555;"></div>
<div class="r" style="left:822px;top:597px;width:8px;height:2px;background:#555;"></div>
<div class="r" style="left:825px;top:594px;width:2px;height:8px;background:#555;"></div>
<div class="t" style="left:846.20px;top:589.84px;font-size:12px;line-height:16px;color:#444;font-weight:400;font-family:'Liberation Sans',sans-serif;transform:scaleX(0.8742);">100%</div>
<div class="r" style="left:0px;top:60px;width:1px;height:550px;background:#2B579A;"></div>
<div class="r" style="left:892px;top:60px;width:1px;height:550px;background:#2B579A;"></div>
<div class="r" style="left:0px;top:609px;width:893px;height:1px;background:#2B579A;"></div>
</body></html>
